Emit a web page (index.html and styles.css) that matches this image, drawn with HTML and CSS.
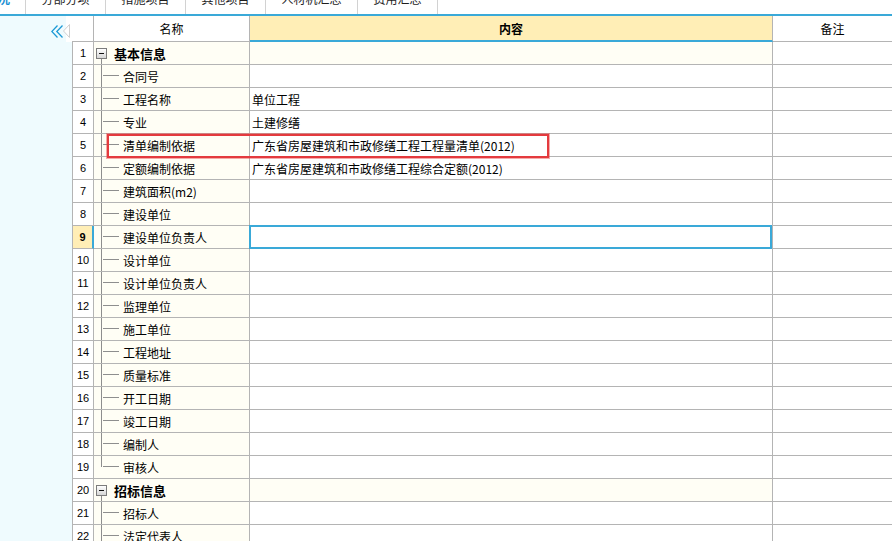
FILE: index.html
```html
<!DOCTYPE html>
<html lang="zh-CN">
<head>
<meta charset="utf-8">
<title>工程概况</title>
<link rel="stylesheet" href="styles.css">
</head>
<body>
<nav class="tabs">
  <div class="tab tab-active">概况</div>
  <div class="tab">分部分项</div>
  <div class="tab">措施项目</div>
  <div class="tab">其他项目</div>
  <div class="tab tab-wide">人材机汇总</div>
  <div class="tab">费用汇总</div>
</nav>
<div class="bluebar"></div>
<div class="main">
  <aside class="sidebar">
    <svg class="collapse" width="13" height="13" viewBox="0 0 13 13">
      <polyline points="6.5,0.5 0.8,6.5 6.5,12.5" />
      <polyline points="11.5,0.5 5.8,6.5 11.5,12.5" />
    </svg>
  </aside>
  <section class="grid">
    <div class="head">
      <div class="h-rn">
        <svg class="notch" width="8" height="14" viewBox="0 0 8 14"><polygon points="7.5,0.5 1.5,7 7.5,13.5" /></svg>
      </div>
      <div class="h-name">名称</div>
      <div class="h-content">内容</div>
      <div class="h-remark">备注</div>
    </div>
    <div class="rows">
      <div class="row group"><div class="rn">1</div><div class="name"><span class="toggle"></span>基本信息</div><div class="content"></div><div class="remark"></div></div>
      <div class="row"><div class="rn">2</div><div class="name">合同号</div><div class="content"></div><div class="remark"></div></div>
      <div class="row"><div class="rn">3</div><div class="name">工程名称</div><div class="content">单位工程</div><div class="remark"></div></div>
      <div class="row"><div class="rn">4</div><div class="name">专业</div><div class="content">土建修缮</div><div class="remark"></div></div>
      <div class="row"><div class="rn">5</div><div class="name">清单编制依据</div><div class="content">广东省房屋建筑和市政修缮工程工程量清单(2012)</div><div class="remark"></div></div>
      <div class="row"><div class="rn">6</div><div class="name">定额编制依据</div><div class="content">广东省房屋建筑和市政修缮工程综合定额(2012)</div><div class="remark"></div></div>
      <div class="row"><div class="rn">7</div><div class="name">建筑面积(m2)</div><div class="content"></div><div class="remark"></div></div>
      <div class="row"><div class="rn">8</div><div class="name">建设单位</div><div class="content"></div><div class="remark"></div></div>
      <div class="row"><div class="rn rn-sel">9</div><div class="name">建设单位负责人</div><div class="content content-sel"></div><div class="remark"></div></div>
      <div class="row"><div class="rn">10</div><div class="name">设计单位</div><div class="content"></div><div class="remark"></div></div>
      <div class="row"><div class="rn">11</div><div class="name">设计单位负责人</div><div class="content"></div><div class="remark"></div></div>
      <div class="row"><div class="rn">12</div><div class="name">监理单位</div><div class="content"></div><div class="remark"></div></div>
      <div class="row"><div class="rn">13</div><div class="name">施工单位</div><div class="content"></div><div class="remark"></div></div>
      <div class="row"><div class="rn">14</div><div class="name">工程地址</div><div class="content"></div><div class="remark"></div></div>
      <div class="row"><div class="rn">15</div><div class="name">质量标准</div><div class="content"></div><div class="remark"></div></div>
      <div class="row"><div class="rn">16</div><div class="name">开工日期</div><div class="content"></div><div class="remark"></div></div>
      <div class="row"><div class="rn">17</div><div class="name">竣工日期</div><div class="content"></div><div class="remark"></div></div>
      <div class="row"><div class="rn">18</div><div class="name">编制人</div><div class="content"></div><div class="remark"></div></div>
      <div class="row"><div class="rn">19</div><div class="name name-last">审核人</div><div class="content"></div><div class="remark"></div></div>
      <div class="row group"><div class="rn">20</div><div class="name"><span class="toggle"></span>招标信息</div><div class="content"></div><div class="remark"></div></div>
      <div class="row"><div class="rn">21</div><div class="name">招标人</div><div class="content"></div><div class="remark"></div></div>
      <div class="row"><div class="rn">22</div><div class="name">法定代表人</div><div class="content"></div><div class="remark"></div></div>
    </div>
    <div class="mark"></div>
  </section>
</div>
</body>
</html>
```

FILE: styles.css
```css
html, body {
  margin: 0;
  padding: 0;
  background: #ffffff;
  overflow: hidden;
}

body {
  font-family: "Noto Sans CJK SC", "Noto Sans", sans-serif;
  font-size: 12px;
  color: #000000;
}

/* ---------- top tab strip (mostly scrolled off) ---------- */
.tabs {
  display: flex;
  height: 28px;
  margin-top: -14px;
  margin-left: -29px;
  overflow: hidden;
  background: #ffffff;
}

.tab {
  box-sizing: border-box;
  width: 80px;
  height: 28px;
  line-height: 26px;
  text-align: center;
  border-right: 1px solid #d2d2d2;
  color: #1e1e1e;
  font-size: 12px;
  flex: none;
}

.tab-active {
  width: 55px;
  color: #1a8fd2;
  font-weight: bold;
}

.tab-wide {
  width: 92px;
}

.bluebar {
  height: 2px;
  background: #3aa9d8;
}

/* ---------- main area ---------- */
.main {
  display: flex;
  align-items: stretch;
}

.sidebar {
  width: 66px;
  flex: none;
  background: #effbfe;
  display: flex;
  justify-content: flex-end;
  align-items: flex-start;
  padding: 9px 2px 0 0;
  box-sizing: border-box;
}

.collapse polyline {
  fill: none;
  stroke: #1d9ad6;
  stroke-width: 1.3;
}

.grid {
  flex: 1;
  position: relative;
  background: #effbfe;
}

/* header */
.head {
  display: flex;
  height: 26px;
  background: #ffffff;
}

.head > div {
  box-sizing: border-box;
  height: 26px;
  padding-top: 1px;
  line-height: 24px;
  text-align: center;
  flex: none;
}

.h-rn {
  width: 28px;
  position: relative;
  border-right: 1px solid #b4b4b4;
  background: linear-gradient(#b4b4b4, #b4b4b4) 6px 100% / calc(100% - 6px) 1px no-repeat, #ffffff;
}

.notch {
  position: absolute;
  left: -4px;
  top: 8px;
}

.notch polygon {
  fill: #ffffff;
  stroke: #cfcfcf;
  stroke-width: 1;
}

.h-name {
  width: 156px;
  border-right: 1px solid #b4b4b4;
  border-bottom: 1px solid #b4b4b4;
}

.h-content {
  width: 523px;
  background: #ffeeb6;
  border-right: 1px solid #b4b4b4;
  border-bottom: 2px solid #3aa9d8;
  font-weight: bold;
}

.head > .h-remark {
  flex: 1;
  border-bottom: 1px solid #b4b4b4;
}

/* rows */
.row {
  display: flex;
  height: 23px;
}

.row > div {
  box-sizing: border-box;
  height: 23px;
  padding-top: 1px;
  line-height: 21px;
  border-bottom: 1px solid #b4b4b4;
  white-space: nowrap;
  overflow: hidden;
  flex: none;
}

.row > .rn {
  margin-left: 6px;
  width: 22px;
  border-left: 1px solid #b4b4b4;
  border-right: 1px solid #b4b4b4;
  background: #ffffff;
  text-align: center;
  font-family: "Liberation Sans", Arial, sans-serif;
  font-size: 11px;
}

.row > .rn-sel {
  background: #ffeeb6;
  font-weight: bold;
  border-right: 2px solid #3aa9d8;
}

.row > .name {
  width: 156px;
  padding-left: 29px;
  border-right: 1px solid #b4b4b4;
  background-color: #fffef5;
  background-image: linear-gradient(#8e8e8e, #8e8e8e), linear-gradient(#8e8e8e, #8e8e8e);
  background-size: 1px 100%, 16px 1px;
  background-position: 7px 0, 9px 10px;
  background-repeat: no-repeat;
  background-origin: border-box;
}

.row > .name-last {
  background-size: 1px 11px, 16px 1px;
}

.row.group > .name {
  display: flex;
  align-items: center;
  gap: 7px;
  padding-top: 0;
  padding-left: 2px;
  font-weight: bold;
  font-size: 13px;
  background-image: linear-gradient(#8e8e8e, #8e8e8e);
  background-size: 1px 100%;
  background-position: 7px 16px;
}

.toggle {
  display: inline-block;
  box-sizing: border-box;
  width: 11px;
  height: 11px;
  border: 1px solid #7c7c7c;
  background: linear-gradient(#ffffff, #d6d6d6);
  position: relative;
  flex: none;
}

.toggle::after {
  content: "";
  position: absolute;
  left: 2px;
  top: 4px;
  width: 5px;
  height: 1px;
  background: #111111;
}

.row > .content {
  width: 523px;
  padding-left: 2px;
  border-right: 1px solid #b4b4b4;
  background: #ffffff;
}

.row.group > .content {
  background: #fffef5;
}

.row > .content-sel {
  position: relative;
  overflow: visible;
}

.content-sel::after {
  content: "";
  position: absolute;
  left: -1px;
  top: -1px;
  right: 0;
  bottom: -1px;
  border: 2px solid #3aa9d8;
}

.row > .remark {
  flex: 1;
  background: #ffffff;
}

/* red annotation box drawn over the grid */
.mark {
  position: absolute;
  left: 41px;
  top: 118px;
  width: 442px;
  height: 24px;
  box-sizing: border-box;
  border: 2px solid #e43a3e;
  box-shadow: 0 0 0 1px rgba(232, 70, 72, 0.45);
  pointer-events: none;
}
```
